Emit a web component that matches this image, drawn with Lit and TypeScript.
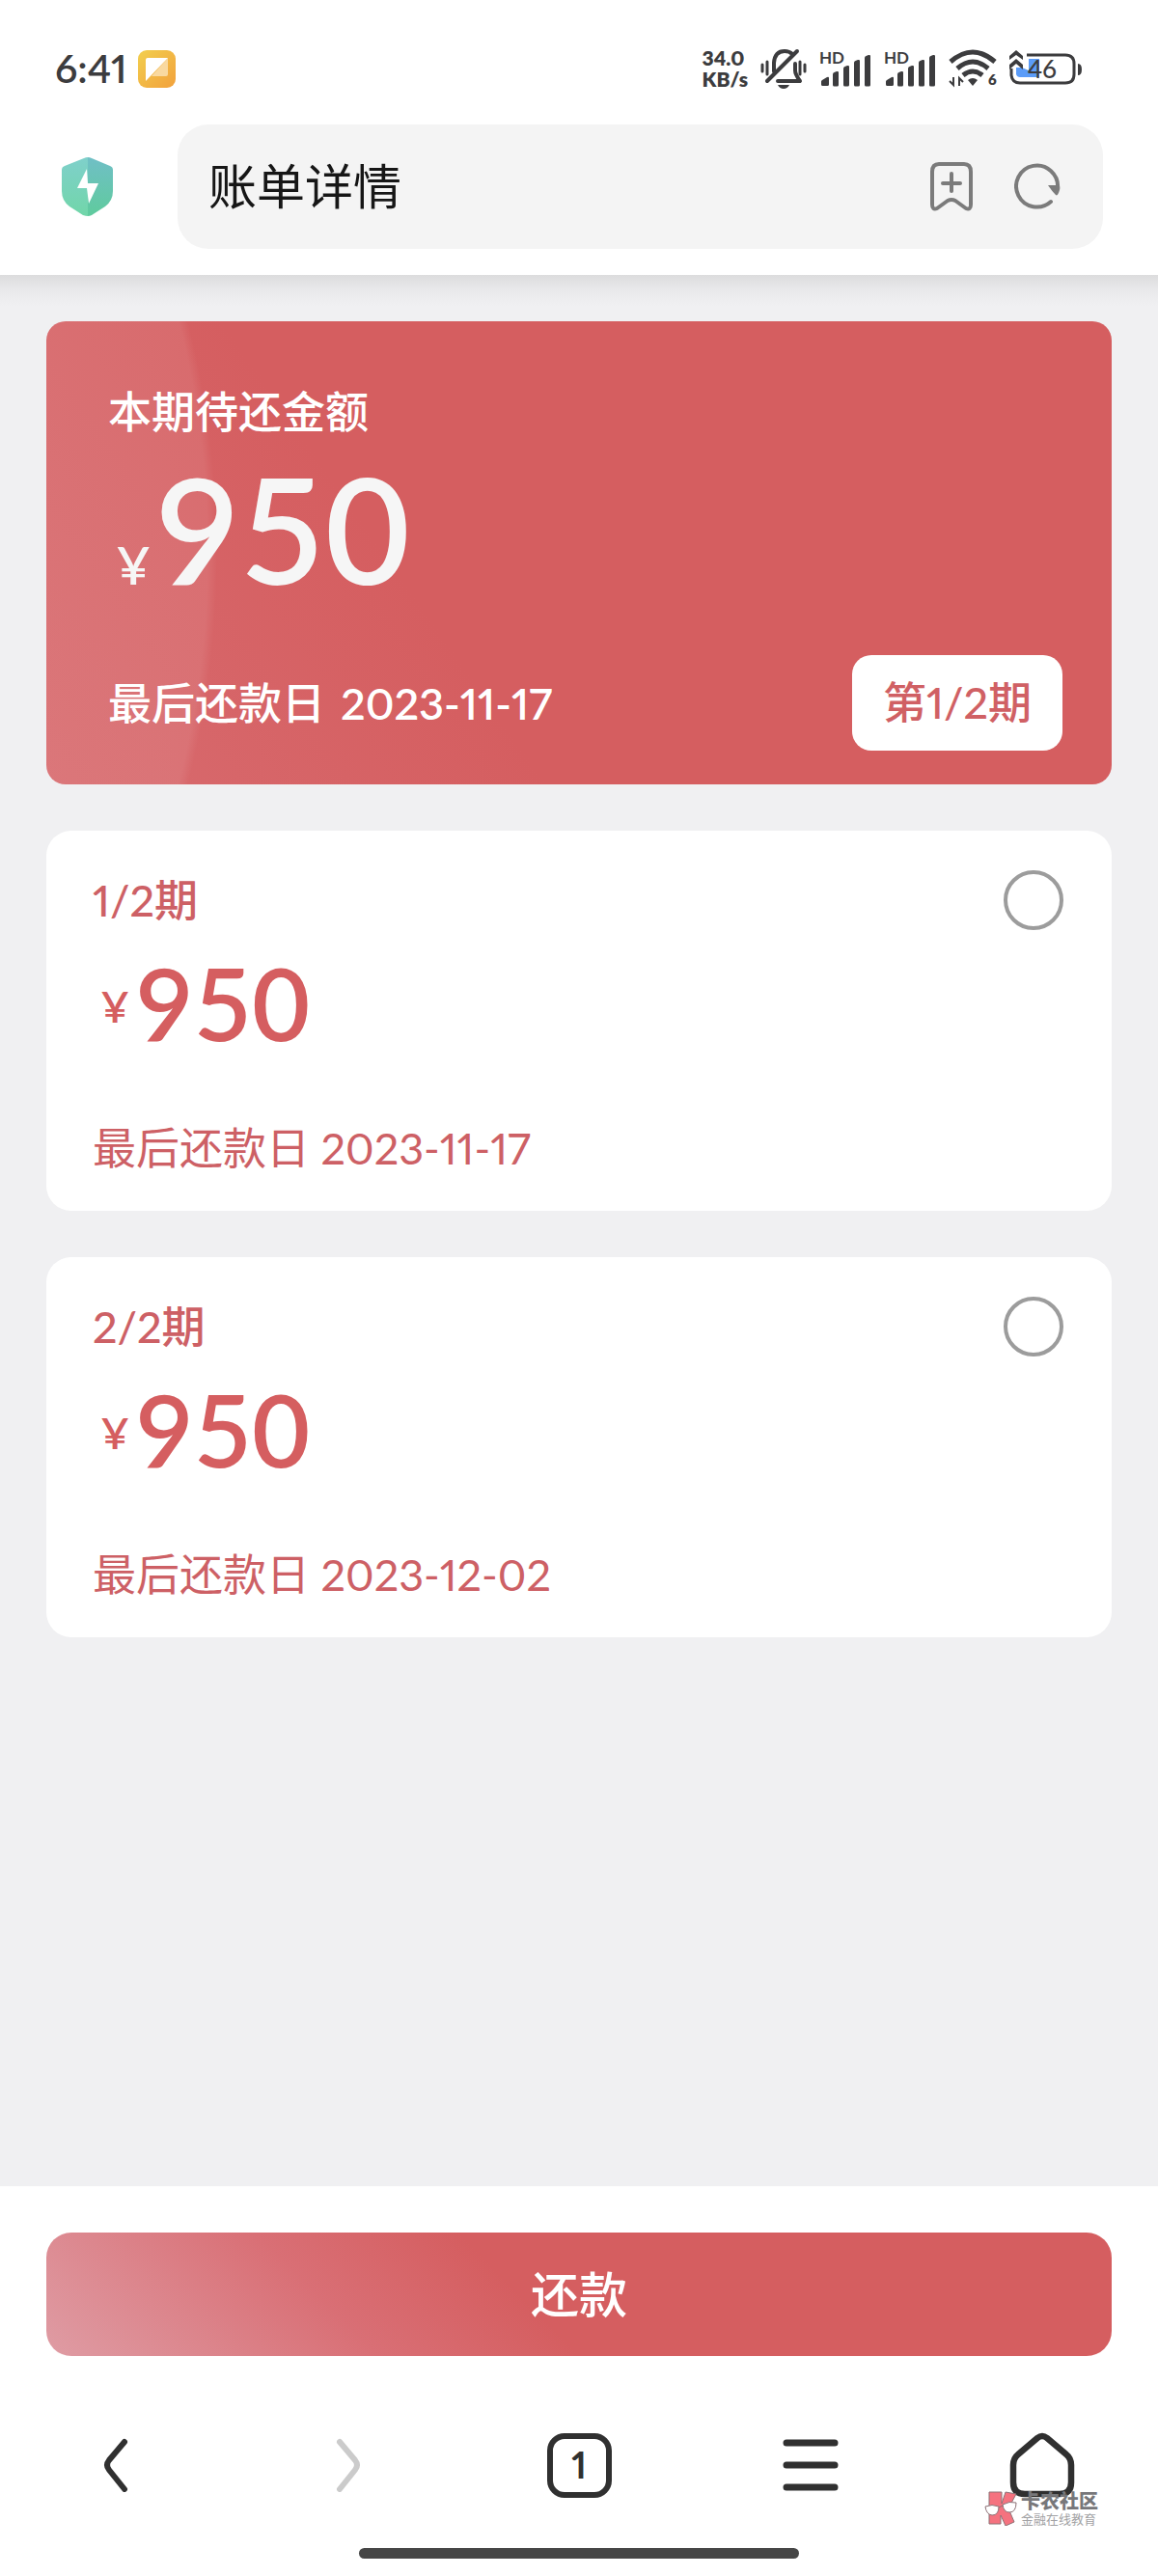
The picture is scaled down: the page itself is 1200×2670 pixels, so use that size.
import { LitElement, html, css, svg } from "lit";
import { customElement, property, state } from "lit/decorators.js";

interface Instalment {
  id: string;
  title: string;
  amount: string;
  due: string;
}

const INSTALMENTS: Instalment[] = [
  { id: "p1", title: "1/2期", amount: "950", due: "2023-11-17" },
  { id: "p2", title: "2/2期", amount: "950", due: "2023-12-02" },
];

const FONT = css`"Lato", "Noto Sans CJK SC", sans-serif`;

@customElement("status-bar")
export class StatusBar extends LitElement {
  static styles = css`
    :host {
      display: flex;
      align-items: center;
      justify-content: space-between;
      height: 46px;
      padding: 0 78px 0 57px;
      color: #3c3c3e;
      font-family: ${FONT};
    }
    .side {
      display: flex;
      align-items: center;
    }
    .left {
      gap: 11px;
    }
    .right {
      gap: 13px;
    }
    .clock {
      font-size: 41px;
      line-height: 46px;
      font-weight: 600;
      font-variant-numeric: proportional-nums;
    }
    .speed {
      display: flex;
      flex-direction: column;
      font-size: 21px;
      line-height: 22px;
      font-weight: 800;
      font-variant-numeric: proportional-nums;
    }
    svg {
      display: block;
    }
    .hd {
      font: 700 17px "Lato", sans-serif;
    }
    .six {
      font: 800 15px "Lato", sans-serif;
    }
    .level {
      font: 500 26px "Lato", sans-serif;
    }
  `;

  private signal() {
    return html`<svg width="54" height="52" viewBox="0 -6 54 52" fill="currentColor" role="img" aria-label="HD">
      ${svg`
        <text class="hd" x="0" y="15">HD</text>
        <path d="M2 36.500 v-3 q0-1 1-1.500 l5-3 q2-1 2 1 v6.500 q0 1.500-1.500 1.500 h-5 Q2 38 2 36.500z" />
        <path d="M14 37v-11q0-1.500 1.500-2l2.500-1q2-.5 2 1v13q0 1.500-1.500 1.500h-3Q14 38.500 14 37z" />
        <path d="M25 37V20q0-1.500 1.500-2l2.500-1q2-.5 2 1v19q0 1.500-1.500 1.500h-3Q25 38.500 25 37z" />
        <path d="M36 37V14q0-1.500 1.500-2l2.500-1q2-.5 2 1v25q0 1.500-1.500 1.500h-3Q36 38.500 36 37z" />
        <path d="M47 37V9q0-1.500 1.500-2l2.500-1q2-.5 2 1v30q0 1.500-1.500 1.500h-3Q47 38.500 47 37z" />`}
    </svg>`;
  }

  render() {
    return html`
      <div class="side left">
        <span class="clock">6:41</span>
        <svg width="39" height="39" viewBox="0 0 39 39" aria-hidden="true">
          <defs>
            <linearGradient id="note" x1="0" y1="0" x2="1" y2="1">
              <stop offset="0" stop-color="#f2cf4e" />
              <stop offset="1" stop-color="#f2a13c" />
            </linearGradient>
          </defs>
          <rect width="39" height="39" rx="9" fill="url(#note)" />
          <path d="M31 8v17q0 2-2 2H14z" fill="#f9d9a0" />
          <path d="M10 8h21L8 32V10q0-2 2-2z" fill="#fff" />
        </svg>
      </div>
      <div class="side right">
        <span class="speed"><span>34.0</span><span>KB/s</span></span>
        <svg width="48" height="42" viewBox="0 0 48 42" fill="none" stroke="currentColor" stroke-width="4" stroke-linecap="round" aria-hidden="true">
          <path d="M2 17v7M7 14v13M41 14v13M46 17v7" stroke-width="3" />
          <path d="M14 24v-9q1-12 11-12q5 0 8 3" />
          <path d="M36 16v7q0 4 5 11H18" stroke-linejoin="round" />
          <path d="M38 3L7 34" />
          <path d="M18 38h12q-2 4-6 4t-6-4z" fill="currentColor" stroke="none" />
        </svg>
        ${this.signal()} ${this.signal()}
        <svg width="50" height="40" viewBox="0 0 50 40" fill="none" stroke="currentColor" stroke-width="5" aria-hidden="true">
          <path d="M2 13q23-20 46 0M9 20q16-14 32 0M15 27q10-8 20 0" />
          <path d="M20 32q5-4 10 0l-5 6z" fill="currentColor" stroke="none" />
          <path d="M5 29v8l-4-4M11 38v-8l4 4" stroke-width="2" />
          ${svg`<text class="six" x="41" y="37" fill="currentColor" stroke="none">6</text>`}
        </svg>
        <svg width="76" height="42" viewBox="0 0 76 42" fill="none" aria-hidden="true">
          <path d="M18 7H58q9 0 9 9v11q0 9-9 9H11q-8 0-9-8v-7" stroke="currentColor" stroke-width="3" />
          <path d="M7 20h6l7 3V11H31V30H11q-3 0-4-3z" fill="#5b9cf8" />
          <path d="M0 8l7-6 7 6v4L7 7 0 12zM0 17l7-6 7 6v5L7 16 0 22z" fill="currentColor" />
          <path d="M71 16q4 0 4 6t-4 6z" fill="currentColor" />
          ${svg`<text class="level" x="19" y="31" fill="currentColor">46</text>`}
        </svg>
      </div>
    `;
  }
}

@customElement("address-bar")
export class AddressBar extends LitElement {
  static styles = css`
    :host {
      display: flex;
      align-items: center;
      gap: 67px;
      padding: 0 57px 0 64px;
      font-family: ${FONT};
    }
    button {
      display: flex;
      padding: 0;
      border: 0;
      background: none;
      color: #7b7b7b;
    }
    .field {
      display: flex;
      flex: 1;
      align-items: center;
      gap: 42px;
      height: 129px;
      box-sizing: border-box;
      padding: 0 44px 2px 32px;
      border-radius: 32px;
      background: #f4f4f4;
    }
    .title {
      flex: 1;
      min-width: 0;
      padding: 0;
      border: 0;
      outline: 0;
      background: none;
      color: #161616;
      font-family: inherit;
      font-size: 50px;
      line-height: 64px;
      font-weight: 400;
    }
  `;

  render() {
    return html`
      <button type="button" aria-label="安全检测">
        <svg width="53" height="61" viewBox="0 0 53 61" aria-hidden="true">
          <defs>
            <linearGradient id="l" x1="0" y1="0" x2="0" y2="1">
              <stop offset="0" stop-color="#7fd0cb" />
              <stop offset="1" stop-color="#71d6a9" />
            </linearGradient>
            <linearGradient id="r" x1="0" y1="0" x2="0" y2="1">
              <stop offset="0" stop-color="#70bfc6" />
              <stop offset="1" stop-color="#5fcb9d" />
            </linearGradient>
          </defs>
          <path d="M27 0q-2 0-4 1L3 9q-3 1-3 4v22q0 10 8 16l14 9q3 1 5 1z" fill="url(#l)" />
          <path d="M27 0q2 0 4 1l19 8q3 1 3 4v22q0 10-8 16l-14 9q-2 1-4 1z" fill="url(#r)" />
          <path d="M26 12L16 32h10l2 16 10-21H27z" fill="#fff" />
        </svg>
      </button>
      <div class="field">
        <input class="title" type="text" aria-label="地址栏" .value=${"账单详情"} />
        <button type="button" aria-label="收藏">
          <svg width="46" height="52" viewBox="0 0 46 52" fill="none" stroke="currentColor" stroke-width="4" stroke-linecap="round" stroke-linejoin="round" aria-hidden="true">
            <path d="M10 3h26q7 0 7 8v34q0 6-5 4L27 41q-4-2-8 0L8 49q-5 2-5-4V11q0-8 7-8z" />
            <path d="M23 13v18M14 23h18" />
          </svg>
        </button>
        <button type="button" aria-label="刷新">
          <svg width="48" height="48" viewBox="0 0 48 48" fill="none" stroke="currentColor" stroke-width="4" stroke-linecap="round" aria-hidden="true">
            <path d="M38 40A21.500 21.500 0 1 1 45 26" />
            <path d="M35 23h11q2 1 1 5-2 7-4 5-4-4-8-10z" fill="currentColor" stroke="none" />
          </svg>
        </button>
      </div>
    `;
  }
}

@customElement("bill-summary")
export class BillSummary extends LitElement {
  static styles = css`
    :host {
      display: block;
      padding: 62px 51px 35px 64px;
      border-radius: 20px;
      color: #fff;
      font-family: ${FONT};
      font-size: 45px;
      line-height: 64px;
      font-weight: 500;
      font-variant-numeric: proportional-nums;
      background:
        radial-gradient(circle at -801px 50%, rgba(255, 255, 255, 0.08) 968px, transparent 978px),
        linear-gradient(55deg, #d86b6f, #d55e60 36%);
    }
    .amount {
      display: flex;
      align-items: baseline;
      gap: 4px;
      margin: 12px 0 56px;
      padding-left: 8px;
      color: #f6f6f6;
    }
    .sign {
      font-size: 54px;
      line-height: 64px;
      font-weight: 600;
    }
    .value {
      font-size: 152px;
      line-height: 152px;
      font-weight: 600;
      font-variant-numeric: normal;
    }
    .foot {
      display: flex;
      align-items: center;
      justify-content: space-between;
    }
    .badge {
      padding: 17px 32px 18px;
      border-radius: 20px;
      background: #fff;
      color: #d06064;
    }
    .title,
    .badge,
    .due {
      white-space: nowrap;
    }
    .due {
      display: flex;
      gap: 16px;
    }
    .date {
      font-weight: 600;
    }
  `;

  render() {
    return html`
      <div class="title">本期待还金额</div>
      <div class="amount"><span class="sign">¥</span><span class="value">950</span></div>
      <div class="foot">
        <span class="due"><span>最后还款日</span><span class="date">2023-11-17</span></span>
        <span class="badge">第1/2期</span>
      </div>
    `;
  }
}

@customElement("instalment-card")
export class InstalmentCard extends LitElement {
  @property({ attribute: false }) item!: Instalment;
  @property({ type: Boolean }) selected = false;

  static styles = css`
    :host {
      display: block;
      padding: 40px 50px 33px 48px;
      border-radius: 26px;
      background: #fff;
      color: #cd6065;
      font-family: ${FONT};
      font-size: 45px;
      line-height: 64px;
      font-variant-numeric: proportional-nums;
    }
    .head {
      display: flex;
      align-items: center;
      justify-content: space-between;
      font-weight: 500;
    }
    .pick {
      appearance: none;
      width: 62px;
      height: 62px;
      margin: 0;
      border: 4px solid #9c9c9c;
      border-radius: 50%;
      background: #fff;
    }
    .pick:checked {
      border-color: #d55e60;
      background: radial-gradient(#d55e60 50%, #fff 54%);
    }
    .amount {
      display: flex;
      align-items: flex-end;
      gap: 6px;
      margin: 22px 0 67px;
      padding-left: 8px;
      color: #d55e60;
    }
    .sign {
      line-height: 96px;
      font-weight: 600;
    }
    .value {
      font-size: 104px;
      line-height: 104px;
      font-weight: 600;
      font-variant-numeric: normal;
    }
  `;

  private pick() {
    this.dispatchEvent(new CustomEvent("pick", { detail: this.item.id }));
  }

  render() {
    return html`
      <div class="head">
        <label for="pick">${this.item.title}</label>
        <input id="pick" class="pick" type="radio" name="instalment" .checked=${this.selected} @change=${this.pick} />
      </div>
      <div class="amount"><span class="sign">¥</span><span class="value">${this.item.amount}</span></div>
      <div class="due">最后还款日 ${this.item.due}</div>
    `;
  }
}

@customElement("browser-nav")
export class BrowserNav extends LitElement {
  static styles = css`
    :host {
      display: block;
      padding: 48px 0 18px;
      font-family: ${FONT};
    }
    .row {
      display: grid;
      grid-template-columns: repeat(5, 1fr);
    }
    button {
      display: flex;
      align-items: center;
      justify-content: center;
      height: 130px;
      padding: 0;
      border: 0;
      background: none;
      color: #303030;
      font-family: inherit;
    }
    .faint {
      color: #cbcbcb;
    }
    .count {
      width: 67px;
      height: 67px;
      box-sizing: border-box;
      border: 6px solid currentColor;
      border-radius: 18px;
      font-size: 38px;
      line-height: 52px;
      font-weight: 700;
      font-variant-numeric: proportional-nums;
    }
    .home {
      position: relative;
    }
    .mark {
      position: absolute;
      left: 60px;
      top: 92px;
      display: flex;
      gap: 4px;
      text-align: left;
      white-space: nowrap;
    }
    .name {
      display: block;
      color: #77777a;
      font-size: 20px;
      line-height: 21px;
      font-weight: 900;
    }
    .motto {
      display: block;
      color: #a2a2a4;
      font-size: 13px;
      line-height: 16px;
      font-weight: 400;
    }
    .bar {
      width: 38%;
      height: 11px;
      margin: 21px auto 0;
      border-radius: 6px;
      background: #464646;
    }
  `;

  render() {
    return html`
      <nav class="row">
        <button type="button" aria-label="后退">
          <svg width="27" height="56" viewBox="0 0 27 56" fill="none" stroke="currentColor" stroke-width="6" stroke-linecap="round" aria-hidden="true">
            <path d="M22 4L6 23q-4 5 0 10l16 20" />
          </svg>
        </button>
        <button type="button" class="faint" aria-label="前进" disabled>
          <svg width="27" height="56" viewBox="0 0 27 56" fill="none" stroke="currentColor" stroke-width="6" stroke-linecap="round" aria-hidden="true">
            <path d="M5 4l16 19q4 5 0 10L5 53" />
          </svg>
        </button>
        <button type="button" aria-label="标签页 1"><span class="count">1</span></button>
        <button type="button" aria-label="菜单">
          <svg width="58" height="56" viewBox="0 0 58 56" fill="none" stroke="currentColor" stroke-width="7" stroke-linecap="round" aria-hidden="true">
            <path d="M4 5h50M4 28h50M4 51h50" />
          </svg>
        </button>
        <button type="button" class="home" aria-label="主页">
          <svg width="68" height="68" viewBox="0 0 68 68" fill="none" stroke="currentColor" stroke-width="6.500" stroke-linejoin="round" aria-hidden="true">
            <path d="M29 6q5-4 10 0l20 17q5 4 5 11v18q0 12-12 12H16Q4 64 4 52V34q0-7 5-11z" />
          </svg>
          <span class="mark">
            <svg width="34" height="36" viewBox="0 0 34 36" stroke="#8d7277" stroke-width="1" aria-hidden="true">
              <path d="M5 1h13v12l4-12 11 2-8 15 6 14-9 4-5-11v9H5z" fill="#f5727f" />
              <path d="M1 16q7-3 14 0 0 9-7 9-6-1-7-9z" fill="#fff" />
              <path d="M19 14q7-4 14-2 0 10-7 10-6 0-7-8z" fill="#fff" />
              <path d="M15 17l4-2" fill="none" />
            </svg>
            <span>
              <span class="name">卡农社区</span>
              <span class="motto">金融在线教育</span>
            </span>
          </span>
        </button>
      </nav>
      <div class="bar"></div>
    `;
  }
}

@customElement("app-root")
export class AppRoot extends LitElement {
  @state() private selected = "";

  static styles = css`
    :host {
      display: flex;
      flex-direction: column;
      min-height: 100vh;
      background: #fff;
      font-family: ${FONT};
    }
    .top {
      display: flex;
      flex-direction: column;
      gap: 35px;
      padding: 48px 0 27px;
    }
    .content {
      display: flex;
      flex: 1;
      flex-direction: column;
      gap: 48px;
      padding: 48px;
      background: linear-gradient(#dcdcdd, #e8e8ea 14px, #f0f0f2 32px);
    }
    .action {
      display: flex;
      padding: 48px 48px 0;
    }
    .repay {
      flex: 1;
      height: 128px;
      border: 0;
      border-radius: 26px;
      color: #fff;
      font-family: inherit;
      font-size: 50px;
      line-height: 64px;
      font-weight: 500;
      background: linear-gradient(45deg, #df9ca4, #d96f75 28%, #d55e60 45%);
    }
  `;

  render() {
    return html`
      <header class="top">
        <status-bar></status-bar>
        <address-bar></address-bar>
      </header>
      <main class="content">
        <bill-summary></bill-summary>
        ${INSTALMENTS.map(
          (item) => html`<instalment-card
            .item=${item}
            .selected=${this.selected === item.id}
            @pick=${(e: CustomEvent<string>) => (this.selected = e.detail)}
          ></instalment-card>`
        )}
      </main>
      <div class="action"><button type="button" class="repay">还款</button></div>
      <browser-nav></browser-nav>
    `;
  }
}
